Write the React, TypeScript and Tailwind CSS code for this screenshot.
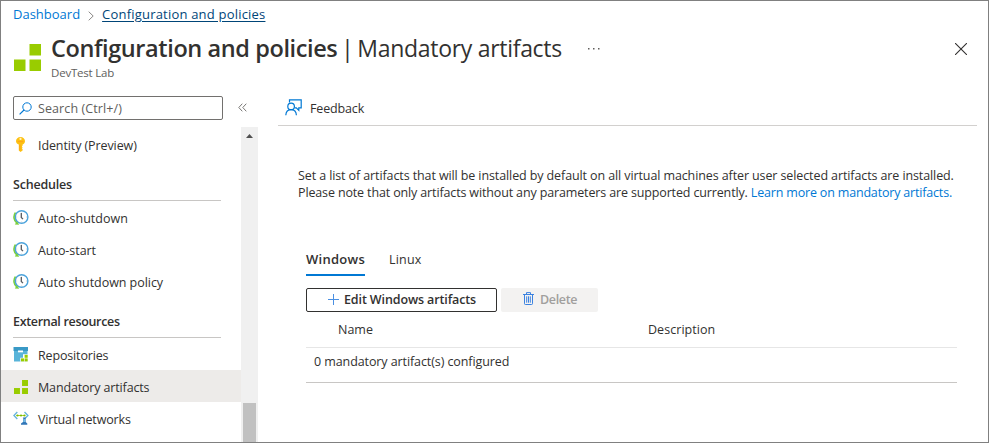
import type { ReactNode } from "react";

function ArtifactsIcon({ className }: { className: string }) {
  return (
    <svg className={className} viewBox="0 0 27 27" fill="#99cc00">
      <rect x="15.500" y="0" width="11.500" height="11.500" />
      <rect x="0" y="15.500" width="11.500" height="11.500" />
      <rect x="15.500" y="15.500" width="11.500" height="11.500" />
    </svg>
  );
}

function KeyIcon() {
  return (
    <svg className="size-4" viewBox="0 0 16 16">
      <path
        d="M7.500.9C10 .9 12 2.700 12 5c0 1.600-1 3-2.400 3.600v1l-.7.9.7.9-.7.9.7.900v1.200L7.500 16l-1.700-1.600V8.600C4.100 7.900 3 6.600 3 5 3 2.700 5 .9 7.500.9z"
        fill="#fdc113"
      />
      <path d="M6.500 8.800h.8v6l-.8-.8z" fill="#ff9a16" />
      <circle cx="7.500" cy="2.900" r="1.100" fill="#fff3c4" />
      <path d="M4.800 5.600h5.400" stroke="#ff9f1a" strokeWidth=".9" />
    </svg>
  );
}

function ClockIcon() {
  return (
    <svg className="size-4" viewBox="0 0 16 16" fill="none">
      <path d="M2.600 3.600A7.300 7.300 0 0 0 4 14" stroke="#7bd03c" strokeWidth="1.700" />
      <circle cx="8.600" cy="8" r="6.300" fill="#fff" stroke="#4ba3dc" strokeWidth="1.400" />
      <path d="M1.800 15.500l4.400.2-2.200-3.500z" fill="#7bd03c" />
      <path d="M8.300 3.900v4.600l1.700 1.600" stroke="#55595e" strokeWidth="1.300" />
      <path d="M8.600 2.400v1M8.600 12.600v1M14 8h-1M4.200 8h-1" stroke="#b9c2ca" strokeWidth=".8" />
    </svg>
  );
}

function RepositoryIcon() {
  return (
    <svg className="size-4" viewBox="0 0 16 16">
      <rect x=".5" y="1" width="14.500" height="4" fill="#3999c6" />
      <rect x="1" y="5" width="13.500" height="10.500" fill="#59b4d9" />
      <rect x="5" y="4.500" width="5" height="1.800" fill="#fff" />
      <path d="M10 8.200h5.400v7.500H7.300v-4H10z" fill="#fff" />
      <rect x="11.600" y="8.800" width="3.100" height="3" fill="#99cc00" />
      <rect x="8" y="12.400" width="3" height="3" fill="#99cc00" />
      <rect x="11.600" y="12.400" width="3.100" height="3" fill="#99cc00" />
    </svg>
  );
}

function NetworkIcon() {
  return (
    <svg className="size-4" viewBox="0 0 16 16" fill="none">
      <path d="M4.300 2L.9 5.500 4.300 9M11.500 2l3.400 3.500L11.500 9" stroke="#69b5dc" strokeWidth="1.400" />
      <path d="M3.300 5.500h9" stroke="#99cc00" strokeWidth=".8" />
      <circle cx="4.500" cy="5.500" r="1.100" fill="#7fba00" />
      <circle cx="8" cy="5.500" r="1.100" fill="#7fba00" />
      <circle cx="11.400" cy="5.500" r="1.100" fill="#7fba00" />
      <path d="M9.800 7.500h3.200l-.5 1 .2 3.500 1.600 1.500v1.300H8v-1.300L10 12l.3-3.500z" fill="#3277b8" />
      <path d="M10.400 9.200l1.900-.1.100 3h-2.200z" fill="#76bce4" />
    </svg>
  );
}

function SearchIcon() {
  return (
    <svg className="h-[13px] w-[13px]" viewBox="0 0 13 13" fill="none" stroke="#0078d4">
      <circle cx="8" cy="5" r="4.200" />
      <path d="M5 8L.6 12.400" strokeWidth="1.200" />
    </svg>
  );
}

function FeedbackIcon() {
  return (
    <svg className="-mt-px -ml-px h-[17px] w-[17px]" viewBox="0 0 17 17" fill="none" stroke="#0078d4" strokeWidth="1.200">
      <path d="M4.500 3.500V.9h11.700v8h-2.400v2.500l-2.500-2.500H9.800" />
      <circle cx="6.100" cy="7.400" r="3.300" />
      <path d="M.8 16.200c.2-3.400 2.400-5.500 5.300-5.500s5.100 2.100 5.300 5.500" />
    </svg>
  );
}

function TrashIcon() {
  return (
    <svg className="-mt-[3px] h-[13px] w-[11px]" viewBox="0 0 11 13" fill="none" stroke="#3b82e0">
      <path d="M0 2.500h11M3.500 2V.6h4V2M1.500 2.500v9.200c0 .5.300.8.800.8h6.400c.5 0 .8-.3.800-.8V2.500" />
      <path d="M3.700 4.300v6.400M5.500 4.300v6.400M7.300 4.300v6.400" />
    </svg>
  );
}

function NavItem({ icon, label, tracking, active }: { icon: ReactNode; label: string; tracking: string; active?: boolean }) {
  return (
    <a className={`flex h-8 items-center pl-3 ${active ? "bg-[#edebe9]" : ""}`}>
      <span className="flex w-[25px] shrink-0">{icon}</span>
      <span className={`pt-1 ${tracking}`}>{label}</span>
    </a>
  );
}

function NavHeading({ label, tracking }: { label: string; tracking: string }) {
  return (
    <h2 className={`ml-3 h-[41px] w-[208px] border-b border-[#c8c6c4] pt-4 leading-[18px] font-semibold ${tracking}`}>
      {label}
    </h2>
  );
}

function Sidebar() {
  return (
    <aside className="flex w-[257px] shrink-0 flex-col">
      <div className="flex h-[31px] items-start pt-[3px] pl-3">
        <div className="flex h-6 w-[210px] items-center rounded-[2px] border border-[#72706e] pl-[5px] text-[#605e5c]">
          <SearchIcon />
          <span className="pt-px pl-[6px] tracking-[0.1px]">Search (Ctrl+/)</span>
        </div>
        <svg className="mt-[7px] ml-[15px] size-[9px]" viewBox="0 0 9 9" fill="none" stroke="#797775">
          <path d="M4.300.7L.8 4.500l3.500 3.800M8.300.7L4.800 4.500l3.500 3.800" />
        </svg>
      </div>
      <div className="flex min-h-0 flex-1 pt-[3px]">
        <nav className="w-60 pt-px">
          <NavItem icon={<KeyIcon />} label="Identity (Preview)" tracking="tracking-[-0.1px]" />
          <NavHeading label="Schedules" tracking="tracking-[-0.2px]" />
          <NavItem icon={<ClockIcon />} label="Auto-shutdown" tracking="tracking-[0px]" />
          <NavItem icon={<ClockIcon />} label="Auto-start" tracking="tracking-[-0.05px]" />
          <NavItem icon={<ClockIcon />} label="Auto shutdown policy" tracking="tracking-[-0.05px]" />
          <NavHeading label="External resources" tracking="tracking-[-0.32px]" />
          <NavItem icon={<RepositoryIcon />} label="Repositories" tracking="tracking-[-0.15px]" />
          <NavItem
            icon={<ArtifactsIcon className="mt-0.5 ml-px size-[14px]" />}
            label="Mandatory artifacts"
            tracking="tracking-[-0.15px]"
            active
          />
          <NavItem icon={<NetworkIcon />} label="Virtual networks" tracking="tracking-[-0.15px]" />
        </nav>
        <div className="flex w-[17px] flex-col items-center bg-[#f0f0f0] pt-[7px]">
          <svg className="h-1 w-[7px]" viewBox="0 0 7 4" fill="#505050">
            <path d="M3.500 0L7 4H0z" />
          </svg>
          <div className="mt-auto h-[39px] w-[13px] bg-[#c1c1c1]" />
        </div>
      </div>
    </aside>
  );
}

function Content() {
  return (
    <main className="ml-5 w-[699px] pt-px">
      <div className="flex h-[32px] items-center border-b border-[#d2d0ce] pb-[3px] pl-2">
        <FeedbackIcon />
        <span className="pt-0.5 pl-2 tracking-[-0.15px]">Feedback</span>
      </div>
      <p className="mt-[41px] ml-5 leading-[17px] whitespace-nowrap">
        <span className="block tracking-[-0.105px]">
          Set a list of artifacts that will be installed by default on all virtual machines after user selected artifacts are installed.
        </span>
        <span className="block tracking-[-0.14px]">
          Please note that only artifacts without any parameters are supported currently.{" "}
          <a className="tracking-[-0.18px] text-[#0078d4]">Learn more on mandatory artifacts.</a>
        </span>
      </p>
      <div className="ml-7 w-[651px]">
        <div className="mt-[50px] flex gap-6">
          <span className="h-[25px] w-[59px] border-b-2 border-[#0078d4] text-[13px] leading-4 font-semibold tracking-[0.27px]">
            Windows
          </span>
          <span className="leading-[18px] tracking-[0.2px]">Linux</span>
        </div>
        <div className="mt-3 flex gap-1 font-semibold">
          <button className="flex h-6 w-[191px] items-center rounded-[2px] border border-[#323130] pl-5">
            <svg className="-mt-0.5 size-3" viewBox="0 0 12 12" stroke="#4a8fe2">
              <path d="M6.500 1v11M1 6.500h11" />
            </svg>
            <span className="pl-[5px] tracking-[-0.12px]">Edit Windows artifacts</span>
          </button>
          <button className="flex h-6 w-[97px] items-center rounded-[2px] bg-[#f3f2f1] pl-[22px] text-[#a19f9d]">
            <TrashIcon />
            <span className="pl-[6px] tracking-[-0.35px]">Delete</span>
          </button>
        </div>
        <div className="flex h-9 border-b border-[#e6e6e6] pt-[9px] leading-[18px] font-medium">
          <span className="w-[310px] pl-8">Name</span>
          <span className="pl-8 tracking-[0.05px]">Description</span>
        </div>
        <div className="h-[35px] border-b border-[#c8c6c4] pt-[5px] pl-2 leading-[18px] tracking-[-0.09px]">
          0 mandatory artifact(s) configured
        </div>
      </div>
    </main>
  );
}

export default function App() {
  return (
    <div className="flex h-[443px] w-[989px] flex-col overflow-hidden border border-[#808080] bg-white font-['Open_Sans','Noto_Sans',sans-serif] text-[12.5px] leading-[18px] text-[#323130]">
      <header className="h-[92px] pl-3">
        <div className="flex h-7 items-center pb-0.5 text-[13px]">
          <a className="tracking-[0px] text-[#0078d4]">Dashboard</a>
          <svg className="mx-2 mt-1 h-[10px] w-[6px]" viewBox="0 0 6 10" fill="none" stroke="#8a8886">
            <path d="M.7.7L5.200 5 .7 9.300" />
          </svg>
          <a className="tracking-[0.2px] text-[#004578] underline underline-offset-2">Configuration and policies</a>
        </div>
        <div className="flex">
          <ArtifactsIcon className="mt-[15px] ml-px size-[27px]" />
          <div className="w-[530px] pt-[3px] pl-[10px]">
            <h1 className="flex text-[23.5px] leading-8 whitespace-nowrap">
              <span className="font-semibold tracking-[-0.4px]">Configuration and policies</span>
              <span className="w-5 text-center">|</span>
              <span className="text-[23px] tracking-[-0.3px]">Mandatory artifacts</span>
            </h1>
            <p className="text-[11.5px] leading-[17px] tracking-[-0.2px] text-[#605e5c]">DevTest Lab</p>
          </div>
          <svg className="mt-[18px] ml-[17px] h-[3px] w-3" viewBox="0 0 12 3" fill="#605e5c">
            <rect x="0" y="1" width="1.500" height="1.500" />
            <rect x="5" y="1" width="1.500" height="1.500" />
            <rect x="10" y="1" width="1.500" height="1.500" />
          </svg>
          <svg className="mt-[14px] mr-[21px] ml-auto size-3" viewBox="0 0 12 12" fill="none" stroke="#323130" strokeWidth="1.100">
            <path d="M0 0l12 12M12 0L0 12" />
          </svg>
        </div>
      </header>
      <div className="flex min-h-0 flex-1">
        <Sidebar />
        <Content />
      </div>
    </div>
  );
}
